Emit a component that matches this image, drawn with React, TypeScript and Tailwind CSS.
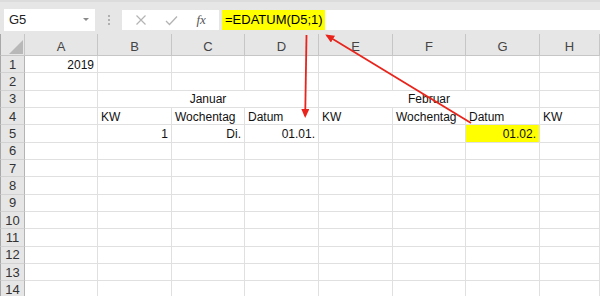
import React from "react";

const COLS = ["A", "B", "C", "D", "E", "F", "G", "H"];
const ROW_COUNT = 14;

type Cell = {
  text?: string;
  align?: "left" | "right" | "center";
  span?: number;
  fill?: string;
};

// row number -> list of cells (A..H), merged cells take a span
const sheet: Record<number, Cell[]> = {
  1: [{ text: "2019", align: "right" }, {}, {}, {}, {}, {}, {}, {}],
  3: [{}, { text: "Januar", align: "center", span: 3 }, { text: "Februar", align: "center", span: 3 }, {}],
  4: [
    {},
    { text: "KW" },
    { text: "Wochentag" },
    { text: "Datum" },
    { text: "KW" },
    { text: "Wochentag" },
    { text: "Datum" },
    { text: "KW" },
  ],
  5: [
    {},
    { text: "1", align: "right" },
    { text: "Di.", align: "right" },
    { text: "01.01.", align: "right" },
    {},
    {},
    { text: "01.02.", align: "right", fill: "yellow" },
    {},
  ],
};

function FormulaBar() {
  return (
    <div className="h-[34px] bg-[#e6e6e6] border-t-[2px] border-[#dcdcdc] flex items-start pt-[7px] pl-[4px]">
      <div className="w-[91px] h-[22px] bg-white flex items-center justify-between pl-[5px] pr-[6px]">
        <span className="text-[13px] text-[#222]">G5</span>
        <svg width="6" height="4" viewBox="0 0 6 4">
          <path d="M0 0 L6 0 L3 3 Z" fill="#8a8a8a" />
        </svg>
      </div>
      <div className="w-[27px] h-[22px] flex flex-col items-center justify-center gap-[2px]">
        <span className="w-[2px] h-[2px] bg-[#b0b0b0]" />
        <span className="w-[2px] h-[2px] bg-[#b0b0b0]" />
        <span className="w-[2px] h-[2px] bg-[#b0b0b0]" />
      </div>
      <div className="w-[97px] h-[20px] mt-[1px] bg-white flex items-center justify-around px-[4px]">
        <svg width="12" height="12" viewBox="0 0 12 12">
          <path d="M1.5 1.5 L10.5 10.5 M10.5 1.5 L1.5 10.5" stroke="#b4b4b4" strokeWidth="1.2" />
        </svg>
        <svg width="13" height="11" viewBox="0 0 13 11">
          <path d="M1 6 L4.5 9.5 L12 1.5" stroke="#b4b4b4" strokeWidth="1.3" fill="none" />
        </svg>
        <span className="text-[13px] italic text-[#555] font-['Liberation_Serif',serif]">fx</span>
      </div>
      <div className="flex-1 h-[20px] mt-[1px] ml-[3px] bg-white flex items-center">
        <span className="bg-[#ffff00] h-[20px] pl-[3px] pr-[2px] text-[13px] leading-[20px] text-black">
          =EDATUM(D5;1)
        </span>
      </div>
    </div>
  );
}

function Arrows() {
  return (
    <svg className="absolute inset-0 pointer-events-none" width="600" height="296" viewBox="0 0 600 296">
      <defs>
        <marker id="head" markerWidth="9" markerHeight="8" refX="7" refY="4" orient="auto" markerUnits="userSpaceOnUse">
          <path d="M0 0 L9 4 L0 8 Z" fill="#e8241c" />
        </marker>
      </defs>
      <line x1="306.5" y1="35" x2="305.2" y2="116" stroke="#e8241c" strokeWidth="1.8" markerEnd="url(#head)" />
      <line x1="471" y1="123" x2="327" y2="35.5" stroke="#e8241c" strokeWidth="1.8" markerEnd="url(#head)" />
    </svg>
  );
}

export default function App() {
  const rows = Array.from({ length: ROW_COUNT }, (_, i) => i + 1);

  return (
    <div className="relative w-[600px] h-[296px] overflow-hidden bg-white font-['Liberation_Sans',Arial,sans-serif]">
      <FormulaBar />
      <div className="grid grid-cols-[25px_73px_74px_73px_74px_74px_73px_74px_60px] grid-rows-[22px_repeat(14,17.33px)]">
        {/* corner */}
        <div className="bg-[#e6e6e6] border-r border-b border-[#c6c6c6] border-l border-l-[#a8a8a8] flex items-end justify-end pr-[1px] pb-[1px]">
          <svg width="14" height="14" viewBox="0 0 14 14">
            <path d="M14 0 L14 14 L0 14 Z" fill="#b8b8b8" />
          </svg>
        </div>
        {COLS.map(c => (
          <div
            key={c}
            className="bg-[#e6e6e6] border-r border-b border-[#c6c6c6] flex items-center justify-center text-[13px] text-[#444] pt-[4px]"
          >
            {c}
          </div>
        ))}

        {rows.map(r => {
          const cells = sheet[r] ?? COLS.map(() => ({}) as Cell);
          return (
            <React.Fragment key={r}>
              <div className="bg-[#e6e6e6] border-l border-l-[#a8a8a8] border-r border-r-[#b4b4b4] border-b border-b-[#d2d2d2] flex items-center justify-center text-[13px] leading-none text-[#333]">
                {r}
              </div>
              {cells.map((cell, i) => (
                <div
                  key={i}
                  style={cell.span ? { gridColumn: `span ${cell.span}` } : undefined}
                  className={
                    "border-r border-b border-[#e0e0e0] flex items-center px-[3px] pt-[1px] text-[12px] leading-none text-[#111] whitespace-nowrap overflow-visible " +
                    (cell.align === "right"
                      ? "justify-end "
                      : cell.align === "center"
                        ? "justify-center "
                        : "justify-start ") +
                    (cell.fill === "yellow" ? "bg-[#ffff00]" : "")
                  }
                >
                  {cell.text}
                </div>
              ))}
            </React.Fragment>
          );
        })}
      </div>
      <Arrows />
    </div>
  );
}
